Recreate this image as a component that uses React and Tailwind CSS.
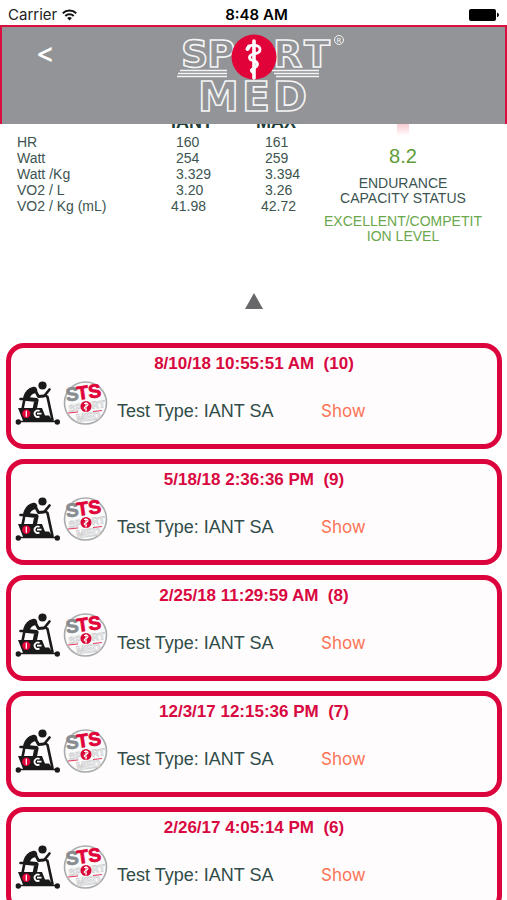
import React from "react";

const rows = [
  { label: "HR", iant: "160", max: "161" },
  { label: "Watt", iant: "254", max: "259" },
  { label: "Watt /Kg", iant: "3.329", max: "3.394" },
  { label: "VO2 / L", iant: "3.20", max: "3.26" },
  { label: "VO2 / Kg (mL)", iant: "41.98", max: "42.72", wide: true },
];

const tests = [
  { date: "8/10/18 10:55:51 AM", n: 10 },
  { date: "5/18/18 2:36:36 PM", n: 9 },
  { date: "2/25/18 11:29:59 AM", n: 8 },
  { date: "12/3/17 12:15:36 PM", n: 7 },
  { date: "2/26/17 4:05:14 PM", n: 6 },
];

function StatusBar() {
  return (
    <div className="grid h-[25px] shrink-0 grid-cols-[1fr_auto_1fr] items-center bg-white px-2 pt-1 font-['Inter',sans-serif] text-[15px] leading-5 text-[#222]">
      <div className="flex items-center gap-[5px]">
        <span>Carrier</span>
        <svg width="15" height="12" viewBox="0 0 15 12" fill="none" stroke="#111" strokeWidth="2" aria-hidden="true">
          <path d="M0.8 4.2a9.6 9.6 0 0 1 13.4 0" />
          <path d="M3.3 7a6 6 0 0 1 8.4 0" />
          <path d="M7.5 11.6 5.1 9.1a3.5 3.5 0 0 1 4.8 0Z" fill="#111" stroke="none" />
        </svg>
      </div>
      <span className="pl-[6px] text-center font-semibold text-black">8:48 AM</span>
      <svg className="justify-self-end" width="30" height="12" viewBox="0 0 30 12" aria-label="Battery full">
        <rect x="0" y="0" width="27" height="12" rx="2" />
        <path d="M28 3.8c2.6.6 2.6 3.8 0 4.4Z" />
      </svg>
    </div>
  );
}

function SportMedLogo() {
  return (
    <svg width="176" height="88" viewBox="0 0 176 88" role="img" aria-label="Sport Med" className="overflow-visible font-['DejaVu_Sans',sans-serif]">
      <g fill="none" stroke="#f4f4f5" strokeWidth="1.6" fontWeight="bold">
        <g fontSize="38">
          <text x="9" y="32">S</text>
          <text x="35" y="32">P</text>
          <text x="101" y="32">R</text>
          <text x="132" y="32">T</text>
        </g>
        <g fontSize="41">
          <text x="26" y="76">M</text>
          <text x="70" y="76">E</text>
          <text x="101" y="76">D</text>
        </g>
      </g>
      <path d="M8 35.5H55M6 38.5H55M5 41.5H55M100 35.5H147M102 38.5H147M104 41.5H147" stroke="#f4f4f5" strokeWidth="1.4" />
      <circle cx="82" cy="22" r="22.5" fill="#e00238" />
      <g fill="none" stroke="#fff" strokeLinecap="round">
        <path d="M82 6V43" strokeWidth="3.6" />
        <path d="M77 11.5c3-2.500 11-1.500 11 3s-5 4-8 5-4 5 1 6 6 5 2 7-5 3-2 5" strokeWidth="2.8" />
        <path d="M77 11.5 75.500 14" strokeWidth="4" />
      </g>
      <circle cx="167" cy="5" r="4.5" fill="none" stroke="#f4f4f5" />
      <text x="167" y="8" fontSize="7" textAnchor="middle" fill="#f4f4f5">R</text>
    </svg>
  );
}

function BikeIcon() {
  return (
    <svg className="shrink-0" width="46" height="46" viewBox="0 0 46 46" aria-hidden="true">
      <circle cx="27.5" cy="5.5" r="4.1" fill="#1b1a1b" />
      <g fill="none" stroke="#1b1a1b" strokeLinecap="round" strokeLinejoin="round">
        <path d="M19 10C15 11 12.5 14 11.5 17.500" strokeWidth="6.5" />
        <path d="M20 10 23.500 16.500 29 16" strokeWidth="2.8" />
        <path d="M12 19 21.500 20 19.500 30" strokeWidth="4.2" />
        <path d="M5.5 19H13M9.500 19 7.500 29" strokeWidth="2.6" />
        <path d="M34.500 9.500 30 15 32.500 17 37.500 40" strokeWidth="2.6" />
      </g>
      <path d="M3 28H27L30 35.500H34L38.500 42H8.500Z" fill="#1b1a1b" />
      <circle cx="3.3" cy="42" r="2.7" fill="#1b1a1b" />
      <circle cx="42.3" cy="42" r="2.7" fill="#1b1a1b" />
      <path d="M5 41.500H41" stroke="#1b1a1b" strokeWidth="1.5" />
      <circle cx="11.300" cy="33.700" r="4.2" fill="#e00238" />
      <path d="M11.300 30.700V36.700" stroke="#fff" strokeWidth="1.3" />
      <path d="M24.500 31a3.200 3.200 0 1 0 0 5.400M22 33.700h4.500" fill="none" stroke="#fff" strokeWidth="1.8" />
    </svg>
  );
}

function StsIcon() {
  return (
    <svg className="shrink-0 overflow-visible font-['Liberation_Sans',sans-serif]" width="46" height="46" viewBox="0 0 46 46" role="img" aria-label="STS Sport Med">
      <circle cx="22.5" cy="23" r="21" fill="#fafafa" stroke="#a9abad" strokeWidth="1.6" />
      <g transform="rotate(-8 22 22)" fontWeight="bold" fill="#fff" stroke="#c8c9cb" strokeWidth="0.7">
        <text x="5" y="30" fontSize="10">SP</text>
        <text x="28" y="30" fontSize="10">RT</text>
        <text x="11" y="41" fontSize="11">MED</text>
      </g>
      <path d="M5 33 15 32M30 31.500 39 30.500" stroke="#e43c62" strokeWidth="1.2" />
      <g transform="rotate(-8 22 22)" fontWeight="bold" fontSize="19" strokeWidth="0.8">
        <text x="4" y="19" fill="#898c8f" stroke="#898c8f">S</text>
        <text x="15" y="19" fill="#e00238" stroke="#e00238">TS</text>
      </g>
      <circle cx="23" cy="26.500" r="5.5" fill="#d90738" />
      <path d="M23 22V31.500M21 23.500c5-1 5 2 2 3s-2 3 1 3" fill="none" stroke="#fff" strokeWidth="1.1" />
    </svg>
  );
}

function TestCard({ date, n }) {
  return (
    <li className="h-[106px] shrink-0 rounded-[18px] border-5 border-[#dc043c] bg-[#fffcfd]">
      <h2 className="pt-1 text-center text-[17px] leading-6 font-bold whitespace-pre text-[#d80840]">{`${date}  (${n})`}</h2>
      <div className="flex items-center pt-1 pl-1">
        <BikeIcon />
        <div className="w-[2px] shrink-0" />
        <StsIcon />
        <p className="w-[212px] shrink-0 pt-4 pl-2 text-lg leading-6 text-[#304c48]">Test Type: IANT SA</p>
        <button type="button" className="pt-4 font-['Inter',sans-serif] text-[17px] leading-6 text-[#fb7353]">Show</button>
      </div>
    </li>
  );
}

export default function App() {
  return (
    <div className="flex h-screen flex-col overflow-hidden bg-white font-['Liberation_Sans',Arial,sans-serif]">
      <StatusBar />
      <header className="grid h-[99px] shrink-0 grid-cols-[1fr_auto_1fr] items-start border-x-2 border-t-2 border-[#d9103f] bg-[#929497]">
        <button type="button" aria-label="Back" className="justify-self-start pt-3 pl-[34px] font-['Inter',sans-serif] text-[28px] leading-7 font-medium text-white">&lt;</button>
        <div className="pt-2 pl-3">
          <SportMedLogo />
        </div>
      </header>

      <main className="min-h-0 flex-1 overflow-hidden">
        <section className="-mt-3 flex h-[230px] text-[#3c5450]">
          <div className="pl-[17px]">
            <table className="border-collapse text-left text-sm leading-4">
              <thead>
                <tr className="h-[22px] align-top text-lg leading-5 text-[#203c38]">
                  <td className="w-[154px] p-0" />
                  <th className="w-[85px] p-0">IANT</th>
                  <th className="w-[62px] p-0">MAX</th>
                </tr>
              </thead>
              <tbody>
                {rows.map((r) => (
                  <tr key={r.label}>
                    <th scope="row" className="p-0 font-normal">{r.label}</th>
                    <td className={r.wide ? "p-0" : "p-0 pl-[5px]"}>{r.iant}</td>
                    <td className={r.wide ? "p-0 pl-[5px]" : "p-0 pl-[9px]"}>{r.max}</td>
                  </tr>
                ))}
              </tbody>
            </table>
          </div>
          <div className="flex w-[170px] flex-col items-center text-center text-sm leading-[15px]">
            <div className="h-6 w-3 bg-linear-to-b from-[#f7cbd2] from-50% to-white" />
            <p className="pt-2 text-xl leading-6 text-[#5f9d3b]">8.2</p>
            <p className="w-[150px] pt-2">ENDURANCE CAPACITY STATUS</p>
            <p className="w-[160px] pt-2 break-all text-[#6aa84c]">EXCELLENT/COMPETITION LEVEL</p>
          </div>
        </section>

        <button type="button" aria-label="Collapse results" className="mx-auto -mt-14 block h-[57px] pb-7">
          <svg width="18" height="16" viewBox="0 0 18 16" aria-hidden="true">
            <path d="M9 0 18 16H0Z" fill="#68686a" />
          </svg>
        </button>

        <ul className="flex flex-col gap-[10px] pr-[5px] pl-[6px]">
          {tests.map((t) => (
            <TestCard key={t.n} {...t} />
          ))}
        </ul>
      </main>
    </div>
  );
}
